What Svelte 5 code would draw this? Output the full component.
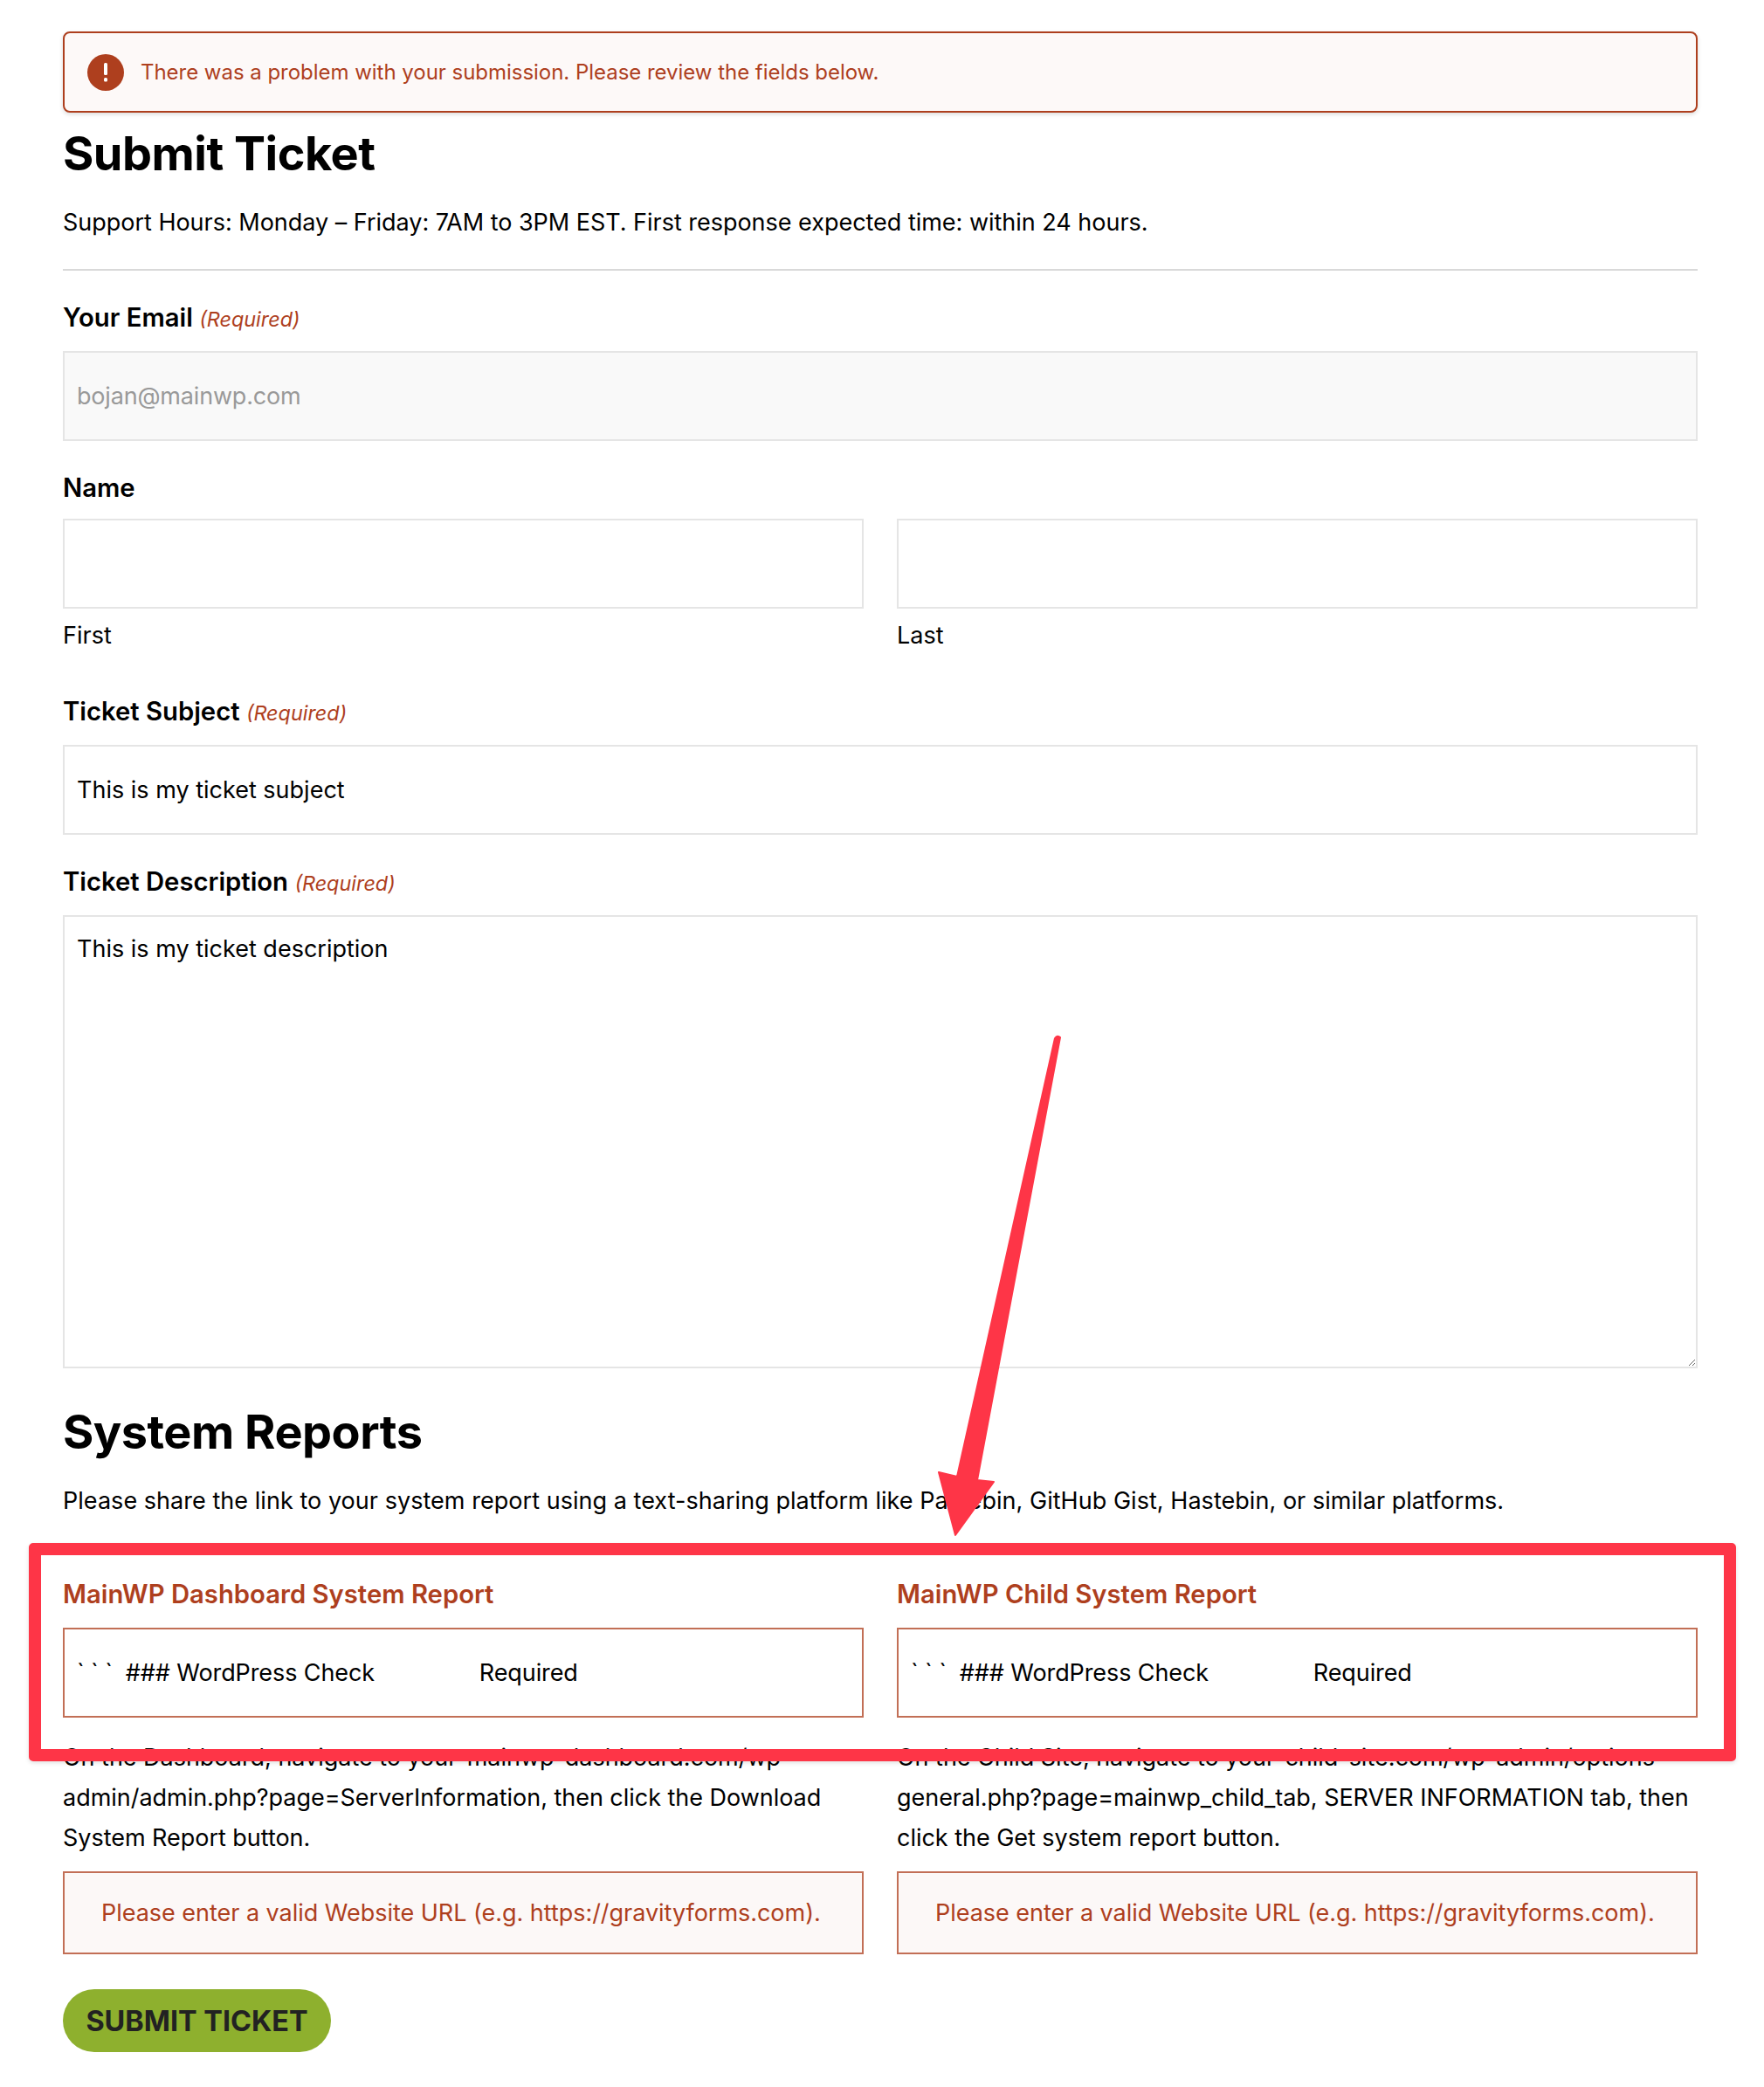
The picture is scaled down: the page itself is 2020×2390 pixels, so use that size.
<script>
  // Support ticket form with validation errors and a review annotation on top
  const reports = [
    {
      title: 'MainWP Dashboard System Report',
      help: 'On the Dashboard, navigate to your-mainwp-dashboard.com/wp-admin/admin.php?page=ServerInformation, then click the Download System Report button.'
    },
    {
      title: 'MainWP Child System Report',
      help: 'On the Child Site, navigate to your-child-site.com/wp-admin/options-general.php?page=mainwp_child_tab, SERVER INFORMATION tab, then click the Get system report button.'
    }
  ];

  const reportValue = '` ` `  ### WordPress Check                Required';
</script>

<div class="page">
  <form class="ticket" onsubmit={(e) => e.preventDefault()}>
    <div class="alert">
      <svg class="alert-icon" width="42" height="42" viewBox="0 0 42 42" aria-hidden="true">
        <circle cx="21" cy="21" r="21" fill="#ae3f1e" />
        <rect x="19" y="10" width="4" height="14" rx="1.5" fill="#fff" />
        <rect x="19" y="27" width="4" height="4.5" rx="1.5" fill="#fff" />
      </svg>
      <span>There was a problem with your submission. Please review the fields below.</span>
    </div>

    <h2 class="first-heading">Submit Ticket</h2>
    <p class="intro">Support Hours: Monday – Friday: 7AM to 3PM EST. First response expected time: within 24 hours.</p>
    <hr />

    <div class="field">
      <label for="email">Your Email <em>(Required)</em></label>
      <input id="email" class="disabled" type="text" placeholder="bojan@mainwp.com" readonly />
    </div>

    <div class="field">
      <span class="label">Name</span>
      <div class="two">
        <div>
          <input type="text" aria-label="First" />
          <span class="sub">First</span>
        </div>
        <div>
          <input type="text" aria-label="Last" />
          <span class="sub">Last</span>
        </div>
      </div>
    </div>

    <div class="field subject">
      <label for="subject">Ticket Subject <em>(Required)</em></label>
      <input id="subject" type="text" value="This is my ticket subject" />
    </div>

    <div class="field">
      <label for="desc">Ticket Description <em>(Required)</em></label>
      <textarea id="desc">This is my ticket description</textarea>
    </div>

    <h2 class="reports-heading">System Reports</h2>
    <p class="share">Please share the link to your system report using a text-sharing platform like Pastebin, GitHub Gist, Hastebin, or similar platforms.</p>

    <div class="two reports">
      {#each reports as report}
        <div class="report">
          <span class="label error-label">{report.title}</span>
          <input class="error-input" type="text" value={reportValue} />
          <p class="help">{report.help}</p>
          <div class="validation">Please enter a valid Website URL (e.g. https://gravityforms.com).</div>
        </div>
      {/each}
    </div>

    <button type="submit">SUBMIT TICKET</button>
  </form>

  <!-- review annotation drawn over the form -->
  <div class="red-box"></div>
  <svg class="arrow" width="2020" height="2390" viewBox="0 0 2020 2390" aria-hidden="true">
    <path
      d="M1208 1189 Q1211 1185 1214 1188 L1119 1695 L1138 1697 L1094 1758 L1075 1686 L1096 1691 Z"
      fill="#fe3547"
      stroke="#fe3547"
      stroke-width="2"
      stroke-linejoin="round"
    />
  </svg>
</div>

<style>
  :global(body) {
    margin: 0;
    background: #fff;
  }

  .page {
    position: relative;
    width: 2020px;
    height: 2390px;
    overflow: hidden;
    font-family: Inter, "Liberation Sans", sans-serif;
    font-size: 27px;
    color: #000;
  }

  .ticket {
    display: flex;
    flex-direction: column;
    padding: 36px 76px 0 72px;
  }

  .alert {
    display: flex;
    align-items: center;
    gap: 19px;
    box-sizing: border-box;
    height: 93px;
    padding: 0 26px;
    border: 2px solid #ae3f1e;
    border-radius: 8px;
    background: #fdf9f8;
    box-shadow: 0 2px 5px rgba(0, 0, 0, 0.14);
    color: #ae3f1e;
    font-size: 24px;
    letter-spacing: -0.03px;
  }

  .alert-icon {
    flex: none;
  }

  h2 {
    margin: 0;
    font-size: 54px;
    font-weight: 700;
    line-height: 66px;
    letter-spacing: -0.5px;
  }

  .first-heading {
    margin-top: 14px;
  }

  p {
    margin: 0;
  }

  .intro {
    margin-top: 26px;
    line-height: 40px;
    letter-spacing: -0.02px;
  }

  hr {
    width: 100%;
    height: 2px;
    margin: 33px 0 0;
    border: 0;
    background: #d9d9d9;
  }

  .field {
    display: flex;
    flex-direction: column;
    margin-top: 36px;
  }

  .subject {
    margin-top: 51px;
  }

  label,
  .label {
    display: block;
    font-size: 29.25px;
    font-weight: 600;
    line-height: 36px;
  }

  label {
    margin-bottom: 20px;
  }

  .label {
    margin-bottom: 17px;
  }

  em {
    color: #ae3f1e;
    font-size: 23.4px;
    font-weight: 400;
    line-height: 1;
  }

  input,
  textarea {
    display: block;
    box-sizing: border-box;
    width: 100%;
    padding: 0 14px;
    border: 2px solid #e5e5e5;
    border-radius: 0;
    outline: none;
    background: #fff;
    color: #000;
    font-family: inherit;
    font-size: 27px;
  }

  input {
    height: 103px;
  }

  textarea {
    height: 519px;
    padding-top: 19px;
    line-height: 36px;
  }

  .disabled {
    background: #f9f9f9;
  }

  .disabled::placeholder {
    color: #999;
    letter-spacing: -0.18px;
  }

  .two {
    display: grid;
    grid-template-columns: 1fr 1fr;
    column-gap: 38px;
  }

  .sub {
    display: block;
    margin-top: 13px;
    line-height: 36px;
  }

  .reports-heading {
    margin-top: 40px;
  }

  .share {
    margin-top: 26px;
    line-height: 40px;
    letter-spacing: 0.04px;
  }

  .reports {
    margin-top: 69px;
  }

  .report {
    display: flex;
    flex-direction: column;
    min-width: 0;
  }

  .error-label {
    margin-bottom: 20px;
    color: #ae3f1e;
  }

  .error-input {
    border-color: #c26f56;
    letter-spacing: -0.1px;
  }

  .help {
    margin-top: 23px;
    line-height: 46px;
    letter-spacing: -0.03px;
  }

  .validation {
    box-sizing: border-box;
    height: 95px;
    margin-top: 15px;
    padding: 0 42px;
    border: 2px solid #c26f56;
    background: #fcf8f7;
    color: #ae3f1e;
    font-size: 27px;
    line-height: 91px;
    letter-spacing: -0.03px;
    white-space: nowrap;
  }

  button {
    align-self: flex-start;
    box-sizing: border-box;
    width: 307px;
    height: 72px;
    margin-top: 40px;
    padding: 0;
    border: 0;
    border-radius: 36px;
    background: #8eb02e;
    color: #222;
    font-family: inherit;
    font-size: 32.4px;
    font-weight: 700;
  }

  .red-box {
    position: absolute;
    left: 33px;
    top: 1767px;
    box-sizing: border-box;
    width: 1955px;
    height: 250px;
    border: 14px solid #fe3547;
    border-radius: 5px;
    box-shadow: 0 2px 5px rgba(0, 0, 0, 0.12);
  }

  .arrow {
    position: absolute;
    left: 0;
    top: 0;
    pointer-events: none;
  }
</style>
